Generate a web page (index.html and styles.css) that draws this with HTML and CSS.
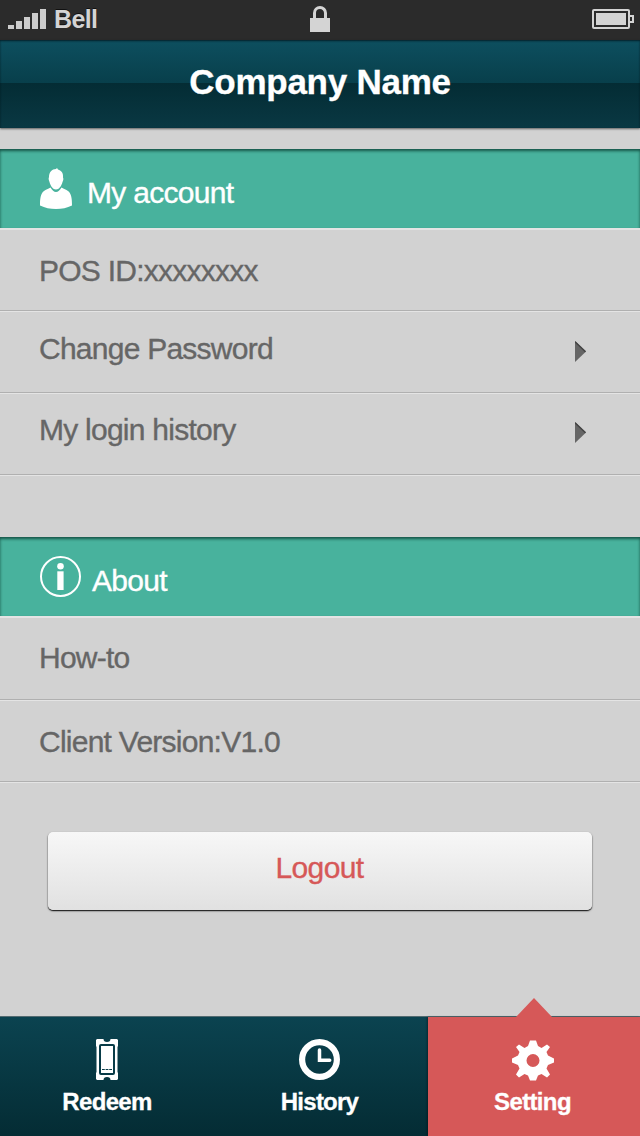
FILE: index.html
```html
<!DOCTYPE html>
<html lang="en">
<head>
<meta charset="utf-8">
<title>Setting</title>
<link rel="stylesheet" href="styles.css">
</head>
<body>
<div class="screen">
  <div class="status">
    <div class="carrier">
      <svg width="38" height="20" viewBox="0 0 38 20" fill="#ccc"><path d="M0 16h6v4H0zM8 12h6v8H8zM16 8h6v12h-6zM24 4h6v16h-6zM32 0h6v20h-6z"/></svg>
      <span class="carrier-name">Bell</span>
    </div>
    <svg class="lock" width="20" height="26" viewBox="0 0 20 26"><path d="M4.500 13V7a5.500 5.500 0 0 1 11 0v6" fill="none" stroke="#d4d4d4" stroke-width="3"/><path d="M0 12h20v14H0z" fill="#d4d4d4"/></svg>
    <svg class="battery" width="42" height="20" viewBox="0 0 42 20"><rect x="1" y="1" width="36" height="18" rx="1" fill="none" stroke="#d4d4d4" stroke-width="2"/><path d="M4 4h30v12H4z" fill="#d4d4d4"/><path d="M38 7h3v6h-3" fill="none" stroke="#d4d4d4" stroke-width="2"/></svg>
  </div>
  <header class="header"><h1 class="title">Company Name</h1></header>
  <main class="content">
    <section class="group">
      <h2 class="group-head">
        <svg class="person" width="32" height="41" viewBox="0 0 32 41" fill="#fff"><path d="M9 9C9 4 12 1 16 1l1-1 1 1.500c3 1 5.500 3 5 8 .7 1.200.3 3-.5 4.500C21.500 18 19 21.500 16 21.500S10.500 18 9.500 14C8.700 12 8.300 10.500 9 9z"/><path d="M10.500 19.500C12 22 14 24 16 24s4-2 5.500-4.500C24 21 26 21.500 28 23c3.500 2.500 4 8 4 14.500C27 40 22 41 16 41S5 40 0 37.500C0 31 .5 25.500 4 23c2-1.500 4-2 6.500-3.500z"/></svg>
        <span class="account-label">My account</span>
      </h2>
      <div class="row">POS ID:xxxxxxxx</div>
      <div class="row raised">Change Password<svg class="arrow" width="11" height="21" viewBox="0 0 11 21"><path d="M0 0l11 10.500L0 21z" fill="#666"/><path d="M0 .7l10.500 10" stroke="#444" stroke-width="1.500"/></svg></div>
      <div class="row raised login">My login history<svg class="arrow" width="11" height="21" viewBox="0 0 11 21"><path d="M0 0l11 10.500L0 21z" fill="#666"/><path d="M0 .7l10.500 10" stroke="#444" stroke-width="1.500"/></svg></div>
    </section>
    <section class="group about">
      <h2 class="group-head">
        <svg class="info" width="41" height="41" viewBox="0 0 41 41"><circle cx="20.500" cy="20.500" r="19.500" fill="none" stroke="#fff" stroke-width="2"/><circle cx="20.500" cy="10.200" r="3.300" fill="#fff"/><path d="M17.300 15.300h6.300V34h-6.300z" fill="#fff"/></svg>
        <span class="about-label">About</span>
      </h2>
      <div class="row howto">How-to</div>
      <div class="row version">Client Version:V1.0</div>
    </section>
    <button class="logout" type="button">Logout</button>
  </main>
  <nav class="tabs">
    <a class="tab redeem">
      <svg class="tab-icon" width="22" height="41" viewBox="0 0 22 41"><path d="M1 0h6.500a3.500 3 0 0 0 7 0H21l1 1v6l-.5 1v25l.5 1v6l-1 1h-6.500a3.500 3 0 0 0-7 0H1l-1-1v-6l.5-1V8L0 7V1z" fill="#fff"/><rect x="4" y="6" width="14" height="29" rx="1" fill="#fff" stroke="#083b47" stroke-width="2"/><path d="M6 30.500h10" stroke="#083b47" stroke-dasharray="2.800 .8"/></svg>
      <span class="tab-label">Redeem</span>
    </a>
    <a class="tab history">
      <svg class="tab-icon" width="41" height="41" viewBox="0 0 41 41" fill="none" stroke="#fff"><circle cx="20.500" cy="20.500" r="17.400" stroke-width="6.200"/><path d="M20.500 11v10.300h10.200" stroke-width="3.500" stroke-linecap="round"/></svg>
      <span class="tab-label">History</span>
    </a>
    <a class="tab setting">
      <svg class="pointer" width="36" height="19" viewBox="0 0 36 19"><path d="M0 19L18 0l18 19z" fill="#d65858"/></svg>
      <svg class="tab-icon" width="42" height="41" viewBox="-21 -20.500 42 41"><path fill="#fff" fill-rule="evenodd" d="M-3-20H3L5-14.500 8.500-12.500 14-16 17-13.500 13.500-8.500 15-5 21-2V2L15 4.500 13.500 8 17 14 14 17 8.500 13.500 5 15 3 20H-3L-5 15-8.500 13.500-14 17-17 14-13.500 8-15 4.500-21 2V-2L-15-5-13.500-8.500-17-13.500-14-16-8.500-12.500-5-14.500zM0-6.500a6.500 6.500 0 1 0 0 13a6.500 6.500 0 1 0 0-13z"/></svg>
      <span class="tab-label">Setting</span>
    </a>
  </nav>
</div>
</body>
</html>
```
FILE: styles.css
```css
* { box-sizing: border-box; }
body { margin: 0; font-family: "Liberation Sans", Arial, sans-serif; }
svg { display: block; flex: none; }
h1, h2 { margin: 0; font-weight: 400; }
.screen { width: 640px; height: 1136px; display: flex; flex-direction: column; background: #d2d2d2; overflow: hidden; }
.status { height: 40px; flex: none; display: grid; grid-template-columns: 1fr 20px 1fr; background: #2b2b2b; padding: 0 6px 0 8px; }
.carrier { display: flex; gap: 8px; padding-top: 9px; }
.carrier-name { color: #d4d4d4; font-size: 25px; line-height: 20px; font-weight: 700; letter-spacing: -.6px; text-shadow: 0 -1px #111; }
.lock { margin: 6px 0 0 -1px; }
.battery { justify-self: end; margin-top: 9px; }
.header { height: 88px; flex: none; display: flex; justify-content: center; background: linear-gradient(#0d4f5f 0, #083f4b 43px, #042c34 43px, #093843 100%); box-shadow: inset 0 1px 2px rgba(0,20,28,.8), 0 1px 2px rgba(0,0,0,.55); }
.title { padding-top: 2px; color: #fff; font-size: 35px; line-height: 80px; font-weight: 700; letter-spacing: -.25px; -webkit-text-stroke: .3px; }
.content { flex: 1; display: flex; flex-direction: column; padding-top: 21px; }
.group-head { height: 79px; display: flex; padding-left: 40px; background: #48b29d; color: #fff; font-size: 30px; line-height: 36px; letter-spacing: -.7px; -webkit-text-stroke: .35px; box-shadow: inset 0 2px 3px rgba(0,45,35,.7); }
.person { margin: 19px 15px 0 0; }
.account-label { padding-top: 26px; }
.info { margin: 19px 11px 0 0; }
.about-label { padding-top: 26px; }
.row { height: 82px; display: flex; justify-content: space-between; padding: 23px 54px 0 39px; color: #666; font-size: 30px; line-height: 36px; letter-spacing: -.75px; -webkit-text-stroke: .35px; border-top: 1px solid #e4e4e4; border-bottom: 1px solid #b0b0b0; }
.group-head + .row { height: 83px; border-top: 2px solid #e4e4e4; }
.raised { padding-top: 19px; }
.arrow { margin-top: 10px; }
.login { padding-top: 18px; }
.about { margin-top: 62px; }
.group { box-shadow: 0 1px #e4e4e4; }
.group-head + .howto { height: 84px; padding-top: 22px; }
.logout { flex: none; width: 544px; height: 78px; margin: 50px 0 0 48px; padding: 0 1px 6px 0; border: 0; border-radius: 5px; background: linear-gradient(#f7f7f7, #e1e1e1); color: #d65858; font: 30px/36px "Liberation Sans", Arial, sans-serif; letter-spacing: -.6px; -webkit-text-stroke: .35px; box-shadow: 0 1px 1px #222, 0 1px 2px rgba(0,0,0,.5); }
.tabs { height: 120px; flex: none; display: grid; grid-template-columns: 214px 214px 212px; background: linear-gradient(#0b4350, #042c34); border-top: 1px solid #526a70; }
.tab { display: flex; flex-direction: column; align-items: center; padding-top: 22px; color: #fff; }
.tab-label { margin-top: 7px; font-size: 24px; line-height: 30px; font-weight: 700; letter-spacing: -.65px; -webkit-text-stroke: .3px; }
.history { padding-right: 3px; }
.history .tab-label { letter-spacing: -.75px; }
.setting { position: relative; background: #d65858; padding-top: 23px; padding-right: 3px; box-shadow: -1px 0 2px rgba(0,0,0,.35); }
.setting .tab-label { margin-top: 6px; }
.pointer { position: absolute; left: 88px; top: -19px; }
```
